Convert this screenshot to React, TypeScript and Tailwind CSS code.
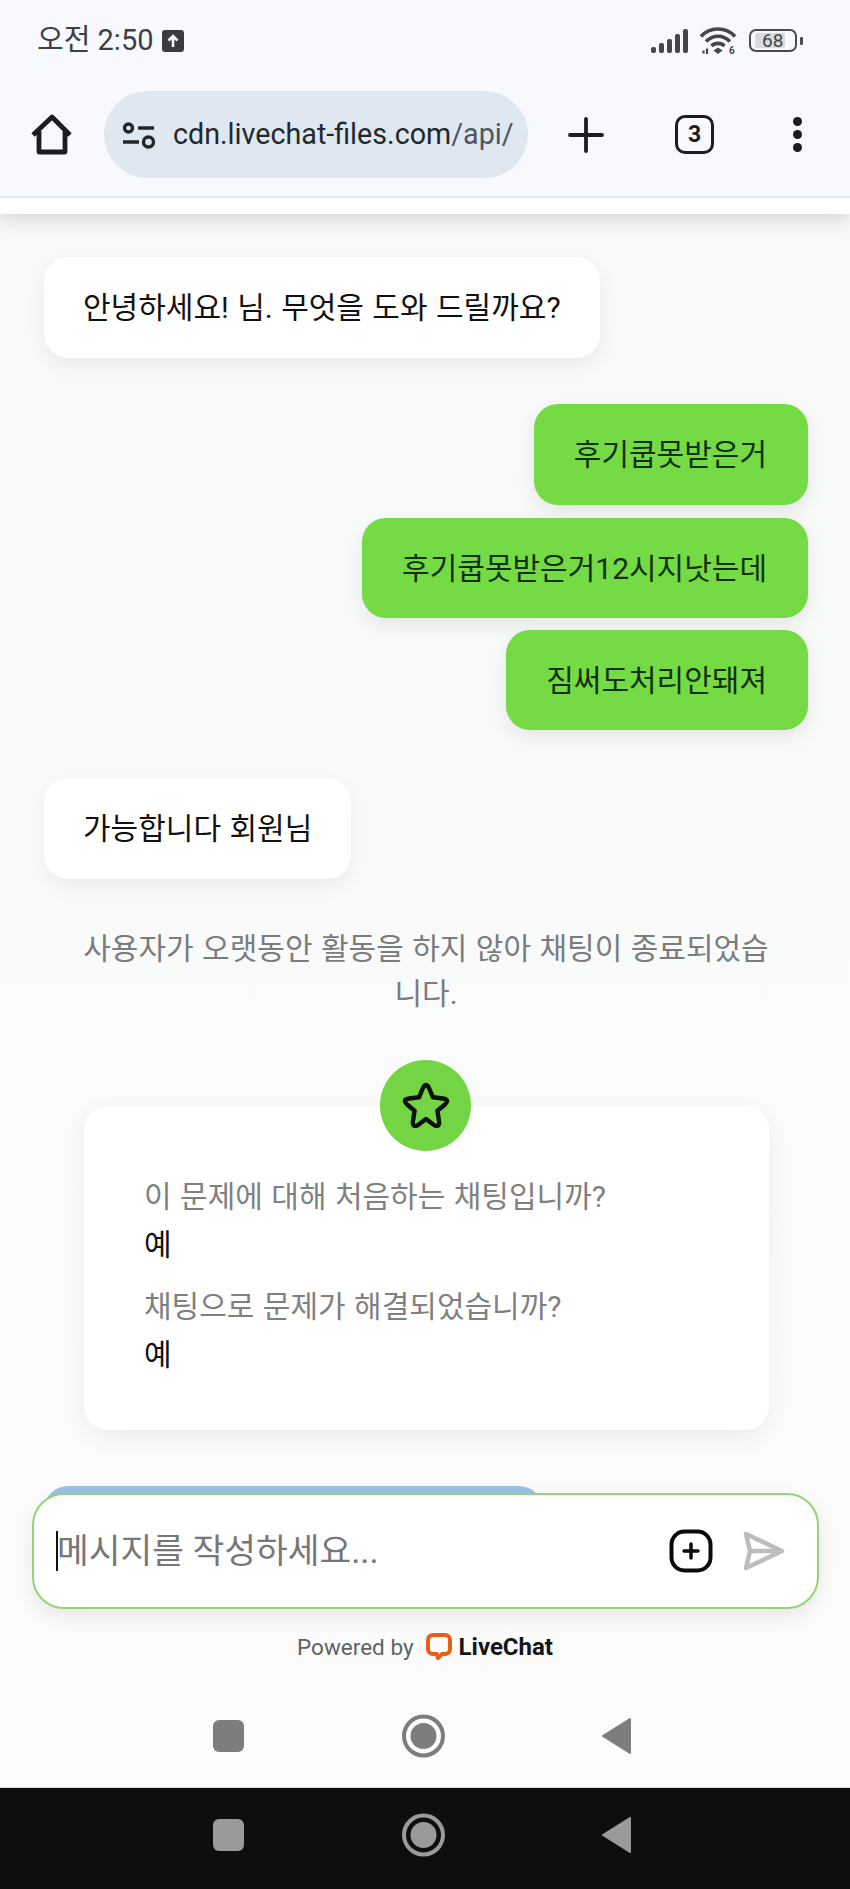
import React from "react";

const font = { fontFamily: '"Roboto", "Noto Sans CJK KR", sans-serif' };

function LeftBubble({ children }: { children: React.ReactNode }) {
  return (
    <div className="flex h-[101px] items-center self-start rounded-[24px] bg-white px-[39px] text-[30px] text-[#111] shadow-[0_8px_20px_rgba(0,0,0,0.06)] [word-spacing:1px]">
      {children}
    </div>
  );
}

function RightBubble({ children, tall }: { children: React.ReactNode; tall?: boolean }) {
  return (
    <div
      className={
        tall
          ? "flex h-[101px] items-center self-end rounded-[24px] bg-[#74db44] pl-[40px] pr-[41px] text-[30px] text-[#12300c] shadow-[0_8px_20px_rgba(0,0,0,0.08)]"
          : "flex h-[100px] items-center self-end rounded-[24px] bg-[#74db44] pl-[40px] pr-[41px] text-[30px] text-[#12300c] shadow-[0_8px_20px_rgba(0,0,0,0.08)]"
      }
    >
      {children}
    </div>
  );
}

function NavIcons({ color }: { color: string }) {
  return (
    <div className="flex items-center justify-center">
      <svg width="450" height="50" viewBox="0 0 450 50" className="ml-[-3px]">
        <rect x="14" y="9" width="31" height="32" rx="6" fill={color} />
        <circle cx="224.500" cy="25" r="19.500" fill="none" stroke={color} strokeWidth="4" />
        <circle cx="224.500" cy="25" r="13" fill={color} />
        <path d="M431 8 L431 42 L404 25 Z" fill={color} stroke={color} strokeWidth="2" strokeLinejoin="round" />
      </svg>
    </div>
  );
}

export default function App() {
  return (
    <div className="relative flex h-[1889px] w-[850px] flex-col overflow-hidden bg-linear-to-b from-[#f7f8f8] to-[#fcfcfc]" style={font}>
      {/* browser chrome */}
      <div className="z-10 bg-white shadow-[0_6px_18px_rgba(0,0,0,0.14)]">
        <div className="h-[198px] border-b-2 border-[#e3e6ec] bg-[#f8f9ff]">
          <div className="flex h-[81px] items-center justify-between pl-[37px] pr-[47px]">
            <div className="flex items-center gap-[9px] text-[#3c3f43]">
              <span className="text-[29px] leading-none">오전 2:50</span>
              <svg width="22" height="22" viewBox="0 0 22 22">
                <rect width="22" height="22" rx="3" fill="#3a3c40" />
                <path d="M11 17V6M6.500 10.500 11 6l4.500 4.500" stroke="#fff" strokeWidth="2.600" fill="none" />
              </svg>
            </div>
            <div className="flex items-center">
              <svg width="38" height="26" viewBox="0 0 38 26" fill="#44464a">
                <rect x="0" y="19" width="5" height="6" rx="2" />
                <rect x="8" y="15" width="5" height="10" rx="2" />
                <rect x="16" y="11" width="5" height="14" rx="2" />
                <rect x="24" y="6" width="5" height="19" rx="2" />
                <rect x="32" y="1" width="5" height="24" rx="2" />
              </svg>
              <svg width="38" height="28" viewBox="0 0 38 28" fill="none" stroke="#44464a" strokeWidth="3.600" className="ml-[10px]">
                <path d="M2 9.500C11 -0.500 27 -0.500 36 9.500" />
                <path d="M7 14.500C14 7.500 24 7.500 31 14.500" />
                <path d="M12.500 19C16 15.500 22 15.500 25.500 19" />
                <path d="M19 20.500l4.500 3-4.500 3.500-4.500-3.500z" fill="#44464a" stroke="none" />
                <path d="M4.500 23.500v3M8 21.500v5.500" strokeWidth="2.200" />
                <text x="30" y="27" fontSize="10" fontWeight="700" fill="#44464a" stroke="none">6</text>
              </svg>
              <div className="ml-[12px] flex items-center gap-[3px]">
                <div className="relative flex h-[23px] w-[48px] items-center rounded-[7px] border-[2px] border-[#4a4c50] px-[4px]">
                  <div className="h-[15px] w-[30px] rounded-[2px] bg-[#d9dbdf]" />
                  <span className="absolute left-[11px] text-[19px] leading-none text-[#44464a]">68</span>
                </div>
                <div className="h-[8px] w-[3px] rounded-[1px] bg-[#4a4c50]" />
              </div>
            </div>
          </div>
          <div className="mt-[10px] flex h-[87px] items-center">
            <div className="flex w-[104px] justify-center">
              <svg width="42" height="42" viewBox="0 0 42 42" fill="none" stroke="#1b1d20" strokeWidth="4.800" strokeLinejoin="round">
                <path d="M2 21 21 3l18 18M8 17v21h26V17" />
              </svg>
            </div>
            <div className="flex h-[87px] w-[424px] items-center gap-[17px] rounded-full bg-[#dfe8f1] pl-[18px]">
              <svg width="34" height="28" viewBox="0 0 34 28" fill="none" stroke="#23272b" strokeWidth="3.400">
                <circle cx="6.500" cy="7" r="4" />
                <path d="M16 7h16M1 21h16" />
                <circle cx="26.500" cy="21" r="5" />
              </svg>
              <span className="whitespace-nowrap text-[28.700px] leading-none text-[#23282d]">
                cdn.livechat-files.com<span className="text-[#4c5560]">/api/</span>
              </span>
            </div>
            <div className="flex w-[116px] justify-center">
              <svg width="36" height="36" viewBox="0 0 36 36" stroke="#1b1d20" strokeWidth="3.800" strokeLinecap="round">
                <path d="M18 2v32M2 18h32" />
              </svg>
            </div>
            <div className="ml-[31px] flex h-[39px] w-[39px] items-center justify-center rounded-[10px] border-[3.500px] border-[#1b1d20] text-[23px] font-bold leading-none text-[#1b1d20]">
              3
            </div>
            <div className="ml-[79px] flex flex-col gap-[4px]">
              <div className="h-[9px] w-[9px] rounded-full bg-[#1b1d20]" />
              <div className="h-[9px] w-[9px] rounded-full bg-[#1b1d20]" />
              <div className="h-[9px] w-[9px] rounded-full bg-[#1b1d20]" />
            </div>
          </div>
        </div>
        <div className="h-[16px]" />
      </div>

      {/* chat */}
      <div className="flex flex-1 flex-col pl-[44px] pr-[42px] pt-[43px]">
        <LeftBubble>안녕하세요! 님. 무엇을 도와 드릴까요?</LeftBubble>
        <div className="mt-[46px] flex flex-col">
          <RightBubble tall>후기쿱못받은거</RightBubble>
          <div className="mt-[13px] flex flex-col">
            <RightBubble>후기쿱못받은거12시지낫는데</RightBubble>
          </div>
          <div className="mt-[12px] flex flex-col">
            <RightBubble>짐써도처리안돼져</RightBubble>
          </div>
        </div>
        <div className="mt-[48px] flex flex-col">
          <LeftBubble>가능합니다 회원님</LeftBubble>
        </div>
        <p className="mx-[36px] mt-[47px] text-center text-[30px] leading-[45px] text-[#7a7c7e] [word-spacing:1px]">
          사용자가 오랫동안 활동을 하지 않아 채팅이 종료되었습니다.
        </p>
        <div className="relative ml-[40px] mr-[39px] mt-[90px] h-[324px] rounded-[24px] bg-white pl-[60px] pt-[68px] shadow-[0_8px_24px_rgba(0,0,0,0.06)]">
          <div className="absolute left-[296px] top-[-46px] flex h-[91px] w-[91px] items-center justify-center rounded-full bg-[#74d544]">
            <svg width="48" height="46" viewBox="0 0 48 46" fill="none" stroke="#0c1208" strokeWidth="4.400" strokeLinejoin="round" className="mt-[-1px]">
              <path d="M17 15.300 L21 6 Q24 0 27 6 L31 15.300 L41 16.500 Q48 17.500 43 22.500 L35.400 28.700 L37 39 Q38 46 32 43 L24 37 L16 43 Q10 46 11 39 L12.600 28.700 L5 22.500 Q0 17.500 7 16.500 Z" />
            </svg>
          </div>
          <div className="text-[30px] leading-[46px] text-[#808080] [word-spacing:1px]">이 문제에 대해 처음하는 채팅입니까?</div>
          <div className="mt-[2px] text-[30px] leading-[46px] text-[#111]">예</div>
          <div className="mt-[16px] text-[30px] leading-[46px] text-[#808080] [word-spacing:1px]">채팅으로 문제가 해결되었습니까?</div>
          <div className="mt-[2px] text-[30px] leading-[46px] text-[#111]">예</div>
        </div>
      </div>

      {/* composer */}
      <div className="pl-[32px] pr-[31px]">
        <div className="-mb-[23px] ml-[12px] h-[30px] w-[499px] rounded-t-[24px] bg-[#9dc0e6]" />
        <div className="relative flex h-[116px] items-center rounded-[32px] border-2 border-[#93d477] bg-white pl-[22px] pr-[32px] shadow-[0_8px_20px_rgba(0,0,0,0.08)]">
          <div className="h-[40px] w-[2px] bg-[#111]" />
          <span className="ml-[-1px] flex-1 text-[34.500px] leading-none text-[#777]">메시지를 작성하세요...</span>
          <svg width="44" height="44" viewBox="0 0 44 44" fill="none" stroke="#0a0a0a" className="mr-[30px]">
            <rect x="2.500" y="2.500" width="39" height="39" rx="13" strokeWidth="4" />
            <path d="M22 15v14M15 22h14" strokeWidth="3.500" strokeLinecap="round" />
          </svg>
          <svg width="42" height="40" viewBox="0 0 42 40" fill="none" stroke="#bdbdbd" strokeWidth="4.500" strokeLinejoin="round">
            <path d="M3 3 39 20 3 37 7 20ZM7 20H39" />
          </svg>
        </div>
      </div>

      {/* footer */}
      <div className="mt-[22px] flex h-[32px] items-center justify-center gap-[12px]">
        <span className="text-[22.500px] leading-none text-[#5f6265]">Powered by</span>
        <div className="flex items-center gap-[7px]">
          <svg width="26" height="28" viewBox="0 0 26 28" fill="none" stroke="#ea5d14" strokeWidth="4" strokeLinejoin="round">
            <path d="M7 2h12c3 0 5 2 5 5v9c0 3-2 5-5 5h-3l-4 4-1-4H7c-3 0-5-2-5-5V7c0-3 2-5 5-5z" />
          </svg>
          <span className="text-[24px] font-bold leading-none text-[#151515]">LiveChat</span>
        </div>
      </div>

      {/* nav bars */}
      <div className="mt-[48px] h-[50px]">
        <NavIcons color="#7d7d7d" />
      </div>
      <div className="mt-[26px] flex h-[102px] items-center justify-center border-t border-[#d8d8d8] bg-[#0d0e0e] pb-[8px]">
        <div className="w-full">
          <NavIcons color="#9a9a9a" />
        </div>
      </div>
    </div>
  );
}
